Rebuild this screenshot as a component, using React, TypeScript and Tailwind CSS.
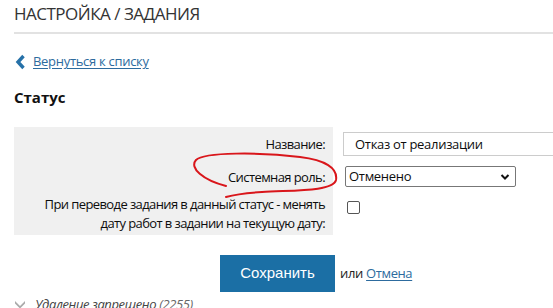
import React from "react";

const App = () => {
  return (
    <div className="relative w-[553px] h-[308px] overflow-hidden bg-white text-[#111]" style={{ fontFamily: '"Open Sans", sans-serif' }}>
      <div className="pl-[14px]">
        <h1 className="pt-[2px] h-[32px] text-[17px] leading-[24px] text-[#333] tracking-[-0.5px]">НАСТРОЙКА / ЗАДАНИЯ</h1>
        <div className="h-[2px] bg-[#e2e2e2]" />

        <div className="mt-[18px] flex items-center h-[20px]">
          <svg width="11" height="16" viewBox="0 0 11 16" className="ml-[1px]">
            <path d="M8.5 2 L3 8 L8.5 14" fill="none" stroke="#2671a8" strokeWidth="3.4" strokeLinejoin="miter" />
          </svg>
          <a href="#" className="ml-[7px] text-[13px] tracking-[-0.3px] text-[#2d6b9e] underline underline-offset-2">Вернуться к списку</a>
        </div>

        <h2 className="mt-[15px] text-[15px] font-bold leading-[20px] text-[#111]">Статус</h2>

        <div className="mt-[20px] grid grid-cols-[319px_1fr] text-[13px] leading-[19px] tracking-[-0.6px] text-[#0d0d0d]">
          <div className="bg-[#f0f0f0] h-[33px] flex items-center justify-end pr-[8px] pt-[2px]">Название:</div>
          <div className="h-[33px] flex items-start pl-[10px] pt-[5px] tracking-normal">
            <div className="h-[24px] w-[260px] border border-[#ccc] pl-[11px] flex items-center text-[13px] tracking-[-0.3px]">Отказ от реализации</div>
          </div>

          <div className="bg-[#f0f0f0] h-[33px] flex items-center justify-end pr-[8px] pt-[2px]">Системная роль:</div>
          <div className="h-[33px] flex items-start pl-[12px] pt-[6px] tracking-normal">
            <div className="h-[21px] w-[171px] border border-[#777] rounded-[2px] pl-[3px] pr-[5px] flex items-center justify-between text-[13px] tracking-[-0.3px]">
              <span>Отменено</span>
              <svg width="10" height="8" viewBox="0 0 10 8">
                <path d="M1.5 2 L5 5.5 L8.5 2" fill="none" stroke="#111" strokeWidth="2" />
              </svg>
            </div>
          </div>

          <div className="bg-[#f0f0f0] h-[42px] flex flex-col items-end justify-center pr-[8px] text-right">
            <span>При переводе задания в данный статус - менять</span>
            <span>дату работ в задании на текущую дату:</span>
          </div>
          <div className="h-[42px] pl-[14px] pt-[8px]">
            <div className="w-[13px] h-[13px] border border-[#555] rounded-[2px] bg-white" />
          </div>
        </div>

        <div className="mt-[20px] flex items-center pl-[206px]">
          <button className="w-[115px] h-[37px] bg-[#1b6fa5] text-white text-[15px]" style={{ fontFamily: '"Liberation Sans", Arial, sans-serif' }}>Сохранить</button>
          <span className="ml-[5px] text-[13px] tracking-[-0.3px] text-[#222]">или</span>
          <a href="#" className="ml-[3px] text-[13px] tracking-[-0.4px] text-[#2d6b9e] underline underline-offset-2">Отмена</a>
        </div>

        <div className="mt-[3px] flex items-center">
          <svg width="12" height="9" viewBox="0 0 12 9">
            <path d="M1 1 L6 6 L11 1 L11 3.5 L6 8.5 L1 3.5 Z" fill="#aaa" />
          </svg>
          <span className="ml-[9px] text-[13px] italic tracking-[-0.4px] text-[#444]">Удаление запрещено <span className="text-[#666]">(2255)</span></span>
        </div>
      </div>

      <svg className="absolute left-0 top-0 pointer-events-none" width="553" height="308" viewBox="0 0 553 308">
        <path
          d="M226 186 C 203 180, 189 168, 196 160 C 204 152, 260 152, 300 157 C 325 160, 338 168, 336 180 C 333 192, 290 190, 262 192 C 245 193, 233 195, 226 197"
          fill="none"
          stroke="#d9161b"
          strokeWidth="2"
          strokeLinecap="round"
        />
      </svg>
    </div>
  );
};

export default App;
